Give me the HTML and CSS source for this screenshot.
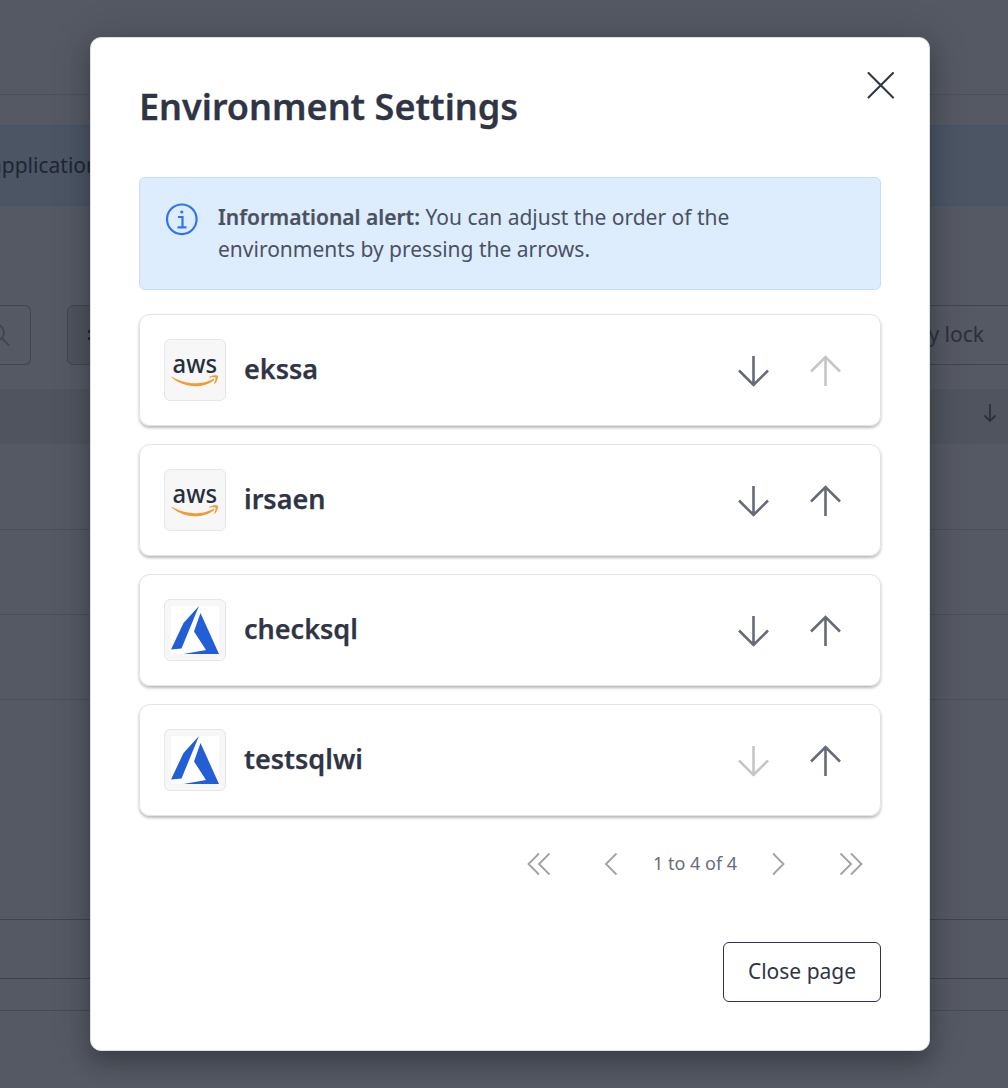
FILE: index.html
```html
<!DOCTYPE html>
<html lang="en">
<head>
<meta charset="utf-8">
<title>Environment Settings</title>
<link rel="stylesheet" href="styles.css">
</head>
<body>
<svg class="defs" aria-hidden="true">
  <symbol id="down" viewBox="0 0 32 32"><path d="M15.500 1v29M1 15.500L15.500 30L30 15.500"/></symbol>
  <symbol id="up" viewBox="0 0 32 32"><path d="M15.500 31V2M1 16.500L15.500 2L30 16.500"/></symbol>
  <symbol id="swoosh" viewBox="0 0 48 48">
    <path d="M.9 30.700C7.500 34.700 15.500 37.200 24 37.200C30.500 37.200 37.500 35.500 42 32.900C43.100 32.500 43.800 33.600 42.700 34.400C37.800 38.100 31 40.200 24.300 40.200C15 40.200 7 36.900.8 31.500C.3 31 .4 30.400.9 30.700Z"/>
    <path d="M38.300 30.800C41 29 46 28.800 46.700 29.700C47.400 30.600 46.400 35.500 43.700 37.800C43.200 38.100 42.900 37.900 43.100 37.400C43.800 35.900 45.100 32.400 44.500 31.700C43.900 30.900 40.300 31.300 38.700 31.500C38.100 31.600 38 31.100 38.300 30.800Z"/>
  </symbol>
  <symbol id="azure" viewBox="0 0 48 48">
    <path fill="#fff" d="M0 0h48v48H0z"/>
    <path fill="#235fd4" d="M28 0L12.500 17L0 43.500L10.500 42.500ZM29.500 7L23 25.500L35 44L12.500 48H48Z"/>
  </symbol>
</svg>

<div class="page">
  <header class="page-header"></header>
  <div class="banner"><span class="banner-text">application</span></div>
  <div class="toolbar">
    <div class="search"><svg width="24" height="24" viewBox="0 0 24 24"><circle cx="10" cy="9.500" r="8"/><path d="M15.500 15L23 22.500"/></svg></div>
    <div class="filter"><span class="bars"></span></div>
    <div class="lock">y lock</div>
  </div>
  <div class="thead"><svg width="14" height="19" viewBox="0 0 14 19"><path d="M7 0v17M1.500 11.500L7 17l5.500-5.500"/></svg></div>
  <div class="row"></div>
  <div class="row"></div>
  <div class="row"></div>
  <div class="row row-last"></div>
  <div class="pager-bar"></div>
  <div class="page-footer"></div>
</div>

<main class="modal" role="dialog">
  <div class="head">
    <h1>Environment Settings</h1>
    <svg class="close" width="28" height="28" viewBox="0 0 28 28"><path d="M1.500 2l24.500 24.500M26 2l-24.500 24.500"/></svg>
  </div>
  <div class="alert">
    <svg width="34" height="34" viewBox="0 0 34 34"><circle cx="16.800" cy="17.300" r="14.800"/><path d="M13 15h4.500v10.300M12.500 25.300h9"/><circle class="dot" cx="16.800" cy="10" r="1.600"/></svg>
    <p><strong>Informational alert:</strong> You can adjust the order of the environments by pressing the arrows.</p>
  </div>
  <ul class="list">
    <li class="card"><span class="logo"><svg><text class="aws-text" x="1.500" y="26.500" textLength="44.500" lengthAdjust="spacingAndGlyphs">aws</text><use class="swoosh" href="#swoosh"/></svg></span><span class="name">ekssa</span><svg class="arrow"><use href="#down"/></svg><svg class="arrow off"><use href="#up"/></svg></li>
    <li class="card"><span class="logo"><svg><text class="aws-text" x="1.500" y="26.500" textLength="44.500" lengthAdjust="spacingAndGlyphs">aws</text><use class="swoosh" href="#swoosh"/></svg></span><span class="name">irsaen</span><svg class="arrow"><use href="#down"/></svg><svg class="arrow"><use href="#up"/></svg></li>
    <li class="card"><span class="logo"><svg><use href="#azure"/></svg></span><span class="name">checksql</span><svg class="arrow"><use href="#down"/></svg><svg class="arrow"><use href="#up"/></svg></li>
    <li class="card"><span class="logo"><svg><use href="#azure"/></svg></span><span class="name">testsqlwi</span><svg class="arrow off"><use href="#down"/></svg><svg class="arrow"><use href="#up"/></svg></li>
  </ul>
  <nav class="pagination">
    <svg class="double" width="24" height="24" viewBox="0 0 24 24"><path d="M12 1.500L1.500 12L12 22.500M22.500 1.500L12 12l10.500 10.500"/></svg>
    <svg class="single" width="14" height="24" viewBox="0 0 14 24"><path d="M12.500 1.500L2 12l10.500 10.500"/></svg>
    <span class="count">1 to 4 of 4</span>
    <svg class="single" width="14" height="24" viewBox="0 0 14 24"><path d="M1 1.500L11.500 12L1 22.500"/></svg>
    <svg class="double" width="24" height="24" viewBox="0 0 24 24"><path d="M1.500 1.500L12 12L1.500 22.500M12 1.500L22.500 12L12 22.500"/></svg>
  </nav>
  <div class="actions"><button class="btn">Close page</button></div>
</main>
</body>
</html>
```
FILE: styles.css
```css
* { box-sizing: border-box; }

body {
  margin: 0;
  width: 1008px;
  height: 1088px;
  overflow: hidden;
  display: grid;
  font-family: "Noto Sans", sans-serif;
  font-size: 21px;
  color: #2f3544;
  background: #555963;
}

svg { display: block; flex: none; fill: none; }
.defs { position: absolute; width: 0; height: 0; }

/* Dimmed page behind the dialog */
.page { grid-area: 1 / 1; width: 1008px; height: 1088px; overflow: hidden; color: #2b303d; }
.page-header { height: 95px; border-bottom: 1px solid #4c505b; }
.banner {
  display: flex;
  align-items: center;
  height: 81px;
  margin-top: 30px;
  padding-bottom: 2px;
  background: #4b5564;
  border: solid #43536a;
  border-width: 1px 0;
}
.banner-text { margin-left: -10px; color: #1e2634; }
.toolbar { display: flex; height: 60px; margin-top: 99px; }
.search {
  display: flex;
  align-items: center;
  justify-content: flex-end;
  width: 31px;
  padding-right: 20px;
  border: 1px solid #41454f;
  border-left: 0;
  border-radius: 0 6px 6px 0;
  stroke: #41454f;
  stroke-width: 2;
}
.filter {
  display: flex;
  align-items: center;
  width: 140px;
  margin-left: 36px;
  padding-left: 20px;
  background: #4f535d;
  border: 1px solid #41454f;
  border-radius: 6px;
}
.bars { width: 20px; height: 10px; border: solid #202532; border-width: 3px 0; }
.lock {
  flex: 1;
  display: flex;
  align-items: center;
  justify-content: flex-end;
  margin-left: 60px;
  padding: 0 24px 2px 0;
  border: solid #41454f;
  border-width: 1px 0;
}
.thead {
  display: flex;
  justify-content: flex-end;
  height: 55px;
  margin-top: 24px;
  padding: 15px 11px 0 0;
  background: #50545e;
  stroke: #2b303d;
  stroke-width: 1.8;
}
.row { height: 86px; border-bottom: 1px solid #4a4e5a; }
.row + .row { height: 85px; }
.row.row-last { height: 220px; border-color: #3f434e; }
.pager-bar { height: 59px; border-bottom: 1px solid #3f434e; }
.page-footer { height: 32px; border-bottom: 1px solid #474b56; }

/* Dialog */
.modal {
  grid-area: 1 / 1;
  z-index: 1;
  width: 840px;
  height: 1014px;
  margin: 37px 0 0 90px;
  padding: 48px;
  background: #fff;
  border: 1px solid #dcdee1;
  border-radius: 11px;
  box-shadow: 0 11px 20px rgba(20, 22, 28, .32), 0 0 42px rgba(20, 22, 28, .16);
}
.head { display: flex; justify-content: space-between; height: 91px; }
h1 { margin: 0; font-size: 36px; font-weight: 600; line-height: 42px; -webkit-text-stroke: .3px; }
.close { margin: -15px -14px 0 0; stroke: #2f3544; stroke-width: 2.1; stroke-linecap: round; }

.alert {
  display: flex;
  gap: 19px;
  height: 113px;
  padding: 23px 60px 0 25px;
  background: #deedfd;
  border: 1px solid #c4def6;
  border-radius: 6px;
  color: #4a5262;
}
.alert svg { margin-top: 1px; stroke: #2f74ef; stroke-width: 2.2; }
.alert .dot { fill: #2f74ef; stroke: none; }
.alert p { margin: 0; line-height: 32px; }
.alert strong { font-weight: 600; -webkit-text-stroke: .2px; }

.list { display: grid; gap: 18px; margin: 24px 0 0; padding: 0; list-style: none; }
.card {
  display: flex;
  align-items: center;
  height: 112px;
  padding: 0 38px 0 24px;
  border: 1px solid #e4e4e5;
  border-radius: 11px;
  box-shadow: 0 2px 3px rgba(0, 0, 0, .28);
}
.logo {
  display: grid;
  place-items: center;
  width: 62px;
  height: 62px;
  background: #f7f7f7;
  border: 1px solid #e6e6e6;
  border-radius: 6px;
}
.logo svg { width: 48px; height: 48px; }
.aws-text { font-size: 26px; font-weight: 500; fill: #252f3e; }
.swoosh { fill: #f29b35; }
.name {
  flex: 1;
  margin-left: 18px;
  padding-bottom: 3px;
  font-size: 27px;
  font-weight: 600;
  line-height: 36px;
  -webkit-text-stroke: .25px;
}
.arrow { width: 32px; height: 32px; margin-top: 2px; stroke: #666b78; stroke-width: 2.6; }
.arrow + .arrow { margin-left: 40px; }
.arrow.off { stroke: #c6c6c8; }

.pagination {
  display: flex;
  align-items: center;
  justify-content: flex-end;
  height: 32px;
  margin-top: 32px;
  padding-right: 18px;
  stroke: #a3a3a5;
  stroke-width: 1.9;
}
.count { width: 84px; margin: 0 35px; padding-bottom: 2px; font-size: 18px; white-space: nowrap; color: #686d7a; }
.double + .single { margin-left: 53px; }
.single + .double { margin-left: 53px; }

.actions { display: flex; justify-content: flex-end; margin-top: 62px; }
.btn {
  width: 158px;
  height: 60px;
  padding: 0 0 2px;
  font: inherit;
  color: #2f3544;
  background: #fff;
  border: 1px solid #2f3544;
  border-radius: 6px;
}
```
